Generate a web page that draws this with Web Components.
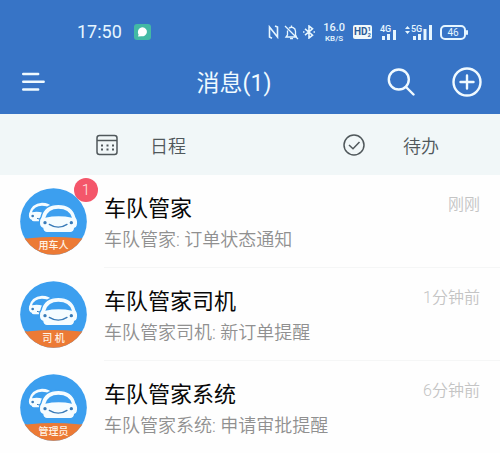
<!DOCTYPE html>
<html lang="zh-CN">
<head>
<meta charset="utf-8">
<meta name="viewport" content="width=device-width, initial-scale=1">
<title>消息</title>
<style>
  body { margin: 0; background: #fefefe; font-family: Roboto, "Noto Sans CJK SC", sans-serif; font-weight: 350; }
</style>
</head>
<body>
<message-app></message-app>

<script>
const define = (name, html, setup) => {
  const template = document.createElement('template');
  template.innerHTML = html;
  customElements.define(name, class extends HTMLElement {
    constructor() {
      super();
      this.attachShadow({ mode: 'open' }).append(template.content.cloneNode(true));
    }
    connectedCallback() { if (setup) setup(this, this.shadowRoot); }
  });
};

define('signal-bars', `
<style>
  :host { display: block; position: relative; height: 15px; color: #e6f6ff; }
  svg { display: block; height: 15px; }
  span { position: absolute; left: 0; top: 0; font: 500 9px/8px Roboto, sans-serif; }
  :host([fast]) span { left: 6px; }
</style>
<svg fill="none" stroke="currentColor" stroke-width="3"></svg><span><slot></slot></span>`,
(host, root) => {
  const svg = root.querySelector('svg');
  const fast = host.hasAttribute('fast');
  svg.setAttribute('width', fast ? 27 : 17);
  svg.innerHTML = fast
    ? '<path d="M9.500 15v-4M14.500 15v-6M20 15V4M25.500 15V0"/><path fill="currentColor" stroke="none" d="M0 4l2.500-3L5 4zM0 6l2.500 3L5 6z"/>'
    : '<path d="M3.500 15v-4M8.500 15V9M14.500 15V5"/>';
});

define('status-bar', `
<style>
  :host { display: flex; align-items: center; height: 16px; padding: 24px 32px 0 77px; color: #e6f6ff; }
  svg { display: block; }
  time { font-size: 18px; line-height: 16px; font-weight: 400; }
  .app { margin-left: 12px; }
  .right { display: flex; align-items: center; gap: 8px; margin-left: auto; }
  .glyphs { display: flex; align-items: center; gap: 4px; }
  .speed { text-align: center; font: 500 8px/9px Roboto, sans-serif; }
  .speed span { display: block; }
  .speed .rate { font-size: 11px; line-height: 12px; }
  .hd { display: flex; align-items: center; height: 14px; padding: 0 1px; border-radius: 2px; background: #f1f9fc; color: #2d5d99; font: 700 10px/14px Roboto, sans-serif; }
  .hd small { font-size: 6px; line-height: 6px; }
  .hd i { display: block; font-style: normal; }
  .battery { position: relative; box-sizing: border-box; width: 26px; height: 15px; margin-right: 2px; border: 2px solid; border-radius: 5px; text-align: center; font: 400 10px/11px Roboto, sans-serif; }
  .battery::after { content: ""; position: absolute; right: -4px; top: 3px; width: 2px; height: 5px; background: currentColor; border-radius: 1px; }
</style>
<time>17:50</time>
<svg class="app" width="17" height="16" viewBox="0 0 17 16"><rect width="17" height="16" rx="3" fill="#43b9a4"/><path fill="#fff" d="M8.500 3.200a5 4.500 0 1 1-1.300 9.100L4 12.500l.6-2A4.800 4.800 0 0 1 8.500 3.200z"/></svg>
<div class="right">
  <div class="glyphs">
    <svg width="12" height="14" viewBox="0 0 12 14" fill="none" stroke="currentColor" stroke-width="1.600"><path d="M4 13.200L1.500 12V2l8 10V2L7 1"/></svg>
    <svg width="15" height="15" viewBox="0 0 15 15" fill="none" stroke="currentColor" stroke-width="1.300"><path d="M3.500 5.500V10L2 12h11M5 3.200a4 4 0 0 1 6.500 3V10l1 1.500M7.500 2V.5M6 13.700h3M1 1l13 13"/></svg>
    <svg width="12" height="14" viewBox="0 0 12 14" fill="none" stroke="currentColor" stroke-width="1.600"><path d="M2 3.800l7.500 6.400L6 13V1l3.500 2.800L2 10.200M0 7h1.500M10.500 7H12"/></svg>
  </div>
  <div class="speed"><span class="rate">16.0</span><span>KB/S</span></div>
  <div class="hd">HD<small><i>1</i><i>2</i></small></div>
  <signal-bars>4G</signal-bars>
  <signal-bars fast>5G</signal-bars>
  <div class="battery">46</div>
</div>`);

define('title-bar', `
<style>
  :host { display: flex; align-items: center; height: 74px; box-sizing: border-box; padding: 10px 18px 0 22px; color: #f0faff; }
  h1 { flex: 1; margin: 0; padding: 4px 0 0 36px; text-align: center; font-size: 23px; line-height: 32px; font-weight: 400; }
  button { padding: 0; border: 0; background: none; color: inherit; }
  button + button { margin-left: 37px; }
  svg { display: block; fill: none; stroke: currentColor; stroke-width: 2.400; stroke-linecap: round; }
</style>
<button aria-label="菜单"><svg width="23" height="20" viewBox="0 0 23 20"><path d="M1.200 2h15M1.200 9.800h20.500M1.200 17.500h15"/></svg></button>
<h1><slot></slot></h1>
<button aria-label="搜索"><svg width="28" height="28" viewBox="0 0 28 28"><circle cx="11.800" cy="11.500" r="10"/><path d="M19 19l7.500 7.500"/></svg></button>
<button aria-label="新建"><svg width="30" height="30" viewBox="0 0 30 30"><circle cx="15" cy="15" r="13.500"/><path d="M15 8.500v13M8.500 15h13"/></svg></button>`);

define('quick-tab', `
<style>
  :host { display: block; flex: 1; }
  button { display: flex; align-items: center; justify-content: center; gap: var(--tab-gap, 32px); width: 100%; height: 61px; padding: 0 0 0 32px; border: 0; background: none; color: #50585b; font: inherit; font-size: 18px; line-height: 24px; }
  span { padding-top: 4px; }
</style>
<button><slot name="icon"></slot><span><slot></slot></span></button>`);

define('car-avatar', `
<style>
  :host { display: block; position: relative; width: 67px; height: 67px; flex: none; }
  svg { display: block; }
  .role { position: absolute; left: 0; right: 0; bottom: 3px; text-align: center; color: #fff3e6; font-size: 10px; line-height: 12px; font-weight: 500; white-space: pre; }
  .badge { position: absolute; right: -11px; top: -10px; width: 24px; height: 24px; border-radius: 50%; background: #f4566a; color: #ffe9e6; text-align: center; font-size: 15px; line-height: 24px; }
  .badge[hidden] { display: none; }
</style>
<svg width="67" height="67" viewBox="0 0 201 201" aria-hidden="true">
  <defs><clipPath id="disc"><circle cx="100.500" cy="100.500" r="100"/></clipPath></defs>
  <g clip-path="url(#disc)">
    <rect width="201" height="201" fill="#3c9fef"/>
    <path fill="#ec7a35" d="M0 145Q12 153 28 151Q100 143 174 151Q190 153 201 145V201H0z"/>
    <path fill="#f5fcff" d="M27 77Q34 46 66 44Q88 44 99 59L88 100H42Q36 100 35 95Q25 92 27 77z"/>
    <path fill="#3c9fef" d="M36 73Q43 53 66 53Q80 53 88 59Q75 66 70 75Q53 69 36 73z"/>
    <circle cx="38" cy="84" r="4" fill="#397bb8"/><path d="M51 91q6 3 12 1" fill="none" stroke="#397bb8" stroke-width="3"/>
    <path fill="#f5fcff" stroke="#3c9fef" stroke-width="4" d="M63 87Q72 49 115 49Q158 49 168 87Q176 98 172 113Q170 120 164 121Q162 134 151 134H81Q70 134 68 121Q58 118 58 105Q57 94 63 87z"/>
    <path fill="#3c9fef" d="M76 89Q84 62 115 62Q148 62 156 89Q116 81 76 89z"/>
    <circle cx="75" cy="104" r="5" fill="#397bb8"/><circle cx="154" cy="104" r="5" fill="#397bb8"/>
    <path fill="none" stroke="#397bb8" stroke-width="4" stroke-linecap="round" d="M88 109Q115 126 141 109"/>
  </g>
</svg>
<span class="role"><slot></slot></span><span class="badge" hidden></span>`,
(host, root) => {
  const badge = root.querySelector('.badge');
  badge.textContent = host.getAttribute('count') || '';
  badge.hidden = !badge.textContent;
});

define('message-row', `
<style>
  :host { display: block; }
  a { display: flex; align-items: center; height: 93px; padding-left: 20px; gap: 17px; color: inherit; text-decoration: none; }
  .body { flex: 1; display: flex; align-items: flex-start; justify-content: space-between; box-sizing: border-box; height: 93px; padding: 19px 20px 0 0; border-bottom: 1px solid #f5f6f6; }
  :host(:last-of-type) a, :host(:last-of-type) .body { height: 92px; border: 0; }
  h2 { margin: 0; color: #080808; font-size: 22px; line-height: 30px; font-weight: 400; }
  p { margin: 3px 0 0; color: #909090; font-size: 18px; line-height: 26px; }
  time { color: #c4c4c4; font-size: 16px; line-height: 22px; }
</style>
<a href="#"><slot name="avatar"></slot><div class="body"><div><h2><slot name="title"></slot></h2><p><slot></slot></p></div><time><slot name="time"></slot></time></div></a>`);

define('message-app', `
<style>
  :host { display: block; }
  header { background: #3774c6; }
  nav { display: flex; background: #f1f7f8; }
  .todo { --tab-gap: 38px; }
  svg { display: block; fill: none; stroke: #50585b; stroke-width: 1.500; }
</style>
<header><status-bar></status-bar><title-bar>消息(1)</title-bar></header>
<nav>
  <quick-tab><svg slot="icon" width="22" height="22" viewBox="0 0 22 22"><rect x="1" y="1.500" width="20" height="19" rx="2.500"/><path d="M1 6.500h20"/><path stroke-width="2" stroke-dasharray="2 3.500" d="M5 11.500h13M5 15.500h13"/></svg>日程</quick-tab>
  <quick-tab class="todo"><svg slot="icon" width="22" height="22" viewBox="0 0 22 22"><circle cx="11" cy="11" r="10"/><path d="M6 11l4 3.800L16.500 8"/></svg>待办</quick-tab>
</nav>
<main>
  <message-row><car-avatar slot="avatar" count="1">用车人</car-avatar><span slot="title">车队管家</span>车队管家: 订单状态通知<span slot="time">刚刚</span></message-row>
  <message-row><car-avatar slot="avatar">司 机</car-avatar><span slot="title">车队管家司机</span>车队管家司机: 新订单提醒<span slot="time">1分钟前</span></message-row>
  <message-row><car-avatar slot="avatar">管理员</car-avatar><span slot="title">车队管家系统</span>车队管家系统: 申请审批提醒<span slot="time">6分钟前</span></message-row>
</main>`);
</script>
</body>
</html>
